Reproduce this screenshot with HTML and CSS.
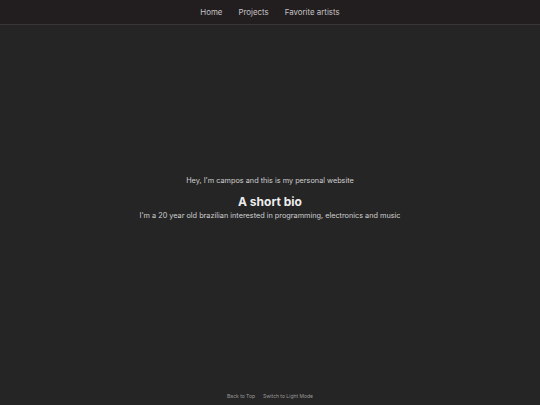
FILE: index.html
```html
<!DOCTYPE html>
<html lang="en">
<head>
<meta charset="utf-8">
<link rel="stylesheet" href="styles.css">
</head>
<body>
<div class="page">
  <nav class="nav">
    <a class="nav-link" href="#">Home</a>
    <a class="nav-link" href="#">Projects</a>
    <a class="nav-link" href="#">Favorite artists</a>
  </nav>
  <main class="main">
    <p class="intro">Hey, I'm campos and this is my personal website</p>
    <h1 class="title">A short bio</h1>
    <p class="bio">I'm a 20 year old brazilian interested in programming, electronics and music</p>
  </main>
  <footer class="footer">
    <a class="foot-link" href="#">Back to Top</a>
    <a class="foot-link" href="#">Switch to Light Mode</a>
  </footer>
</div>
</body>
</html>
```
FILE: styles.css
```css
html, body {
  margin: 0;
  padding: 0;
  background: #252525;
}
.page {
  width: 540px;
  height: 405px;
  display: flex;
  flex-direction: column;
  font-family: Inter, "Liberation Sans", sans-serif;
  color: #e6e6e6;
}
.nav {
  height: 25px;
  box-sizing: border-box;
  background: #221d1f;
  border-bottom: 1px solid #3a3536;
  display: flex;
  justify-content: center;
  align-items: center;
  gap: 16px;
}
.nav-link {
  color: #c4c4c4;
  text-decoration: none;
  font-size: 7.9px;
}
.main {
  flex: 1;
  display: flex;
  flex-direction: column;
  align-items: center;
  justify-content: center;
  padding-bottom: 16px;
}
.intro {
  margin: 0;
  font-size: 7.3px;
  color: #d0d0d0;
}
.title {
  margin: 9px 0 2px;
  font-size: 12px;
  font-weight: 700;
  color: #ececec;
}
.bio {
  margin: 0;
  font-size: 7.3px;
  color: #d0d0d0;
}
.footer {
  height: 19px;
  display: flex;
  justify-content: center;
  align-items: center;
  gap: 8px;
}
.foot-link {
  color: #9a9a9a;
  text-decoration: none;
  font-size: 5px;
}
```
